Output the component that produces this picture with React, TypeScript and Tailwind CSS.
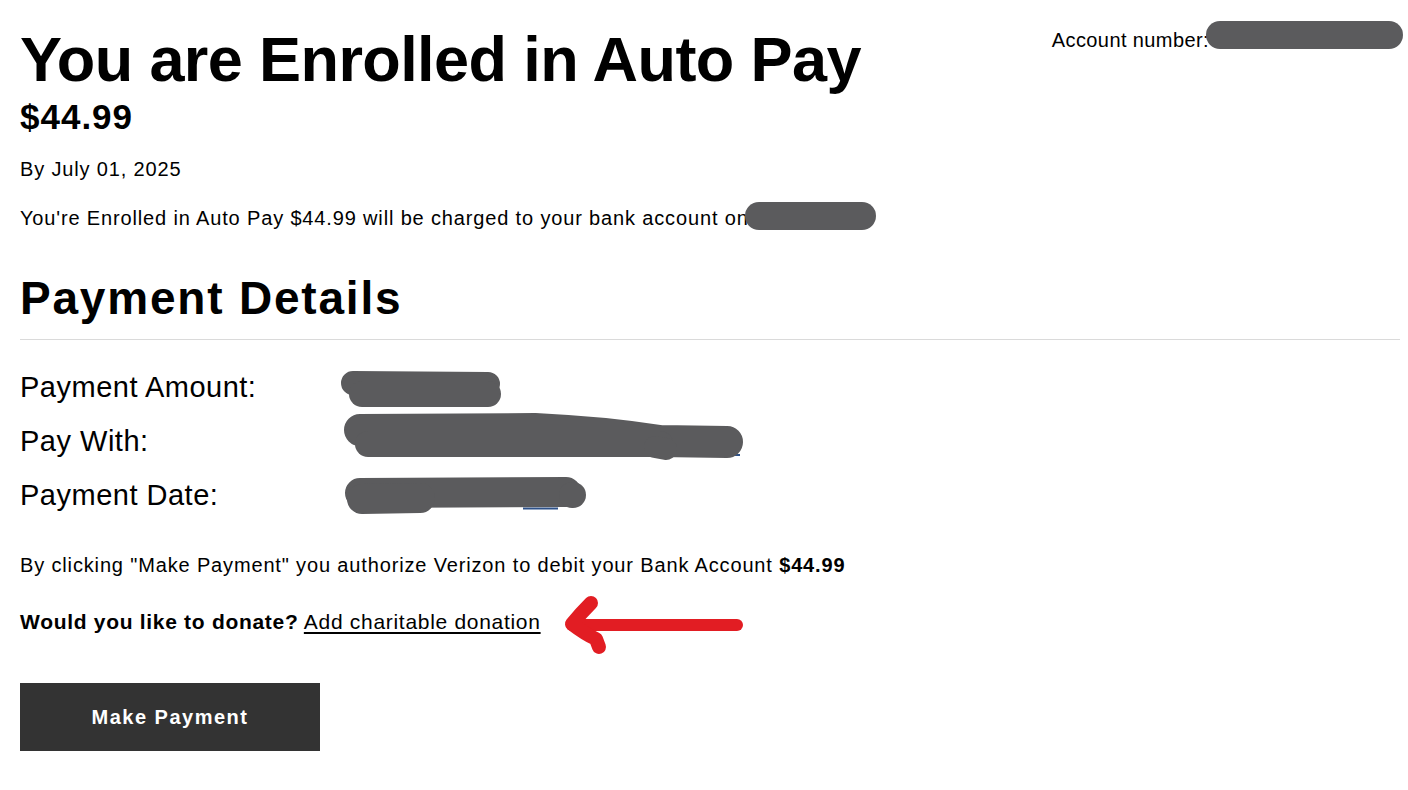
import React from "react";

const Pill = ({ className }: { className: string }) => (
  <span className={"inline-block shrink-0 bg-[#5b5b5d] rounded-full " + className} />
);

function Marks() {
  const g = "#5b5b5d";
  const red = "#e21d23";
  return (
    <svg
      className="pointer-events-none absolute left-0 top-0"
      width="1408"
      height="790"
      viewBox="0 0 1408 790"
      fill="none"
    >
      {/* Payment amount redaction */}
      <path d="M353 383 L488 384" stroke={g} strokeWidth="24" strokeLinecap="round" />
      <path d="M362 394 L488 394" stroke={g} strokeWidth="26" strokeLinecap="round" />
      {/* Pay with redaction */}
      <line x1="706" y1="455" x2="740" y2="455" stroke="#2d5189" strokeWidth="2" />
      <path d="M360 430 L535 429 Q600 432 660 441 L727 442" stroke={g} strokeWidth="32" strokeLinecap="round" strokeLinejoin="round" />
      <path d="M368 444 L660 444" stroke={g} strokeWidth="26" strokeLinecap="round" />
      <path d="M655 447 L666 449" stroke={g} strokeWidth="22" strokeLinecap="round" />
      {/* Payment date redaction */}
      <line x1="523" y1="508.5" x2="558" y2="508.5" stroke="#2d5189" strokeWidth="2" />
      <path d="M360 493 L566 492" stroke={g} strokeWidth="30" strokeLinecap="round" />
      <path d="M572 495 L573 495" stroke={g} strokeWidth="26" strokeLinecap="round" />
      <path d="M362 499 L420 498" stroke={g} strokeWidth="30" strokeLinecap="round" />
      {/* Red arrow */}
      <path d="M572 625 L737 625" stroke={red} strokeWidth="12" strokeLinecap="round" />
      <path d="M591 603 Q581 613 572 624 Q585 634 596 639 L599 647" stroke={red} strokeWidth="14" strokeLinecap="round" strokeLinejoin="round" />
    </svg>
  );
}

export default function App() {
  return (
    <div className="relative h-[790px] w-full overflow-hidden bg-white text-black font-['Liberation_Sans',Arial,sans-serif] pl-5 pr-2">
      <div className="flex items-start justify-between pt-[20px]">
        <div>
          <h1 className="mt-[3px] text-[63px] font-bold leading-[72px] tracking-[-0.6px] whitespace-nowrap">
            You are Enrolled in Auto Pay
          </h1>
          <div className="mt-[2px] text-[35px] font-bold leading-[40px] tracking-[1px]">$44.99</div>
        </div>
        <div className="flex items-start mr-[-3px]">
          <span className="mt-[8px] text-[20px] leading-[24px] tracking-[0.4px] whitespace-nowrap">Account number:</span>
          <Pill className="w-[197px] h-[28px] mt-[1px] -ml-[3px]" />
        </div>
      </div>
      <p className="mt-[20px] text-[20px] leading-[24px] tracking-[0.85px]">By July 01, 2025</p>
      <div className="mt-[25px] flex items-start">
        <p className="text-[20px] leading-[24px] tracking-[0.85px] whitespace-nowrap">
          You&apos;re Enrolled in Auto Pay $44.99 will be charged to your bank account on
        </p>
        <Pill className="w-[131px] h-[28px] -mt-[4px] -ml-[4px]" />
      </div>
      <h2 className="mt-[44px] text-[46px] font-bold leading-[48px] tracking-[1.8px]">Payment Details</h2>
      <div className="mt-[17px] h-px bg-[#dadada]" />
      <div className="mt-[30px] flex flex-col gap-[20px]">
        <div className="h-[34px] text-[29px] leading-[34px] tracking-[0.5px]">Payment Amount:</div>
        <div className="h-[34px] text-[29px] leading-[34px] tracking-[0.5px]">Pay With:</div>
        <div className="h-[34px] text-[29px] leading-[34px] tracking-[0.5px]">Payment Date:</div>
      </div>
      <p className="mt-[41px] text-[20px] leading-[24px] tracking-[0.85px] whitespace-nowrap">
        By clicking &quot;Make Payment&quot; you authorize Verizon to debit your Bank Account <b>$44.99</b>
      </p>
      <p className="mt-[32px] text-[21px] leading-[26px] tracking-[0.7px] whitespace-nowrap">
        <b>Would you like to donate?</b>{" "}
        <a className="underline decoration-2 underline-offset-[3px] cursor-pointer">Add charitable donation</a>
      </p>
      <button className="mt-[48px] block w-[300px] h-[68px] bg-[#333333] text-white font-bold text-[20px] tracking-[1.5px]">
        Make Payment
      </button>
      <Marks />
    </div>
  );
}
